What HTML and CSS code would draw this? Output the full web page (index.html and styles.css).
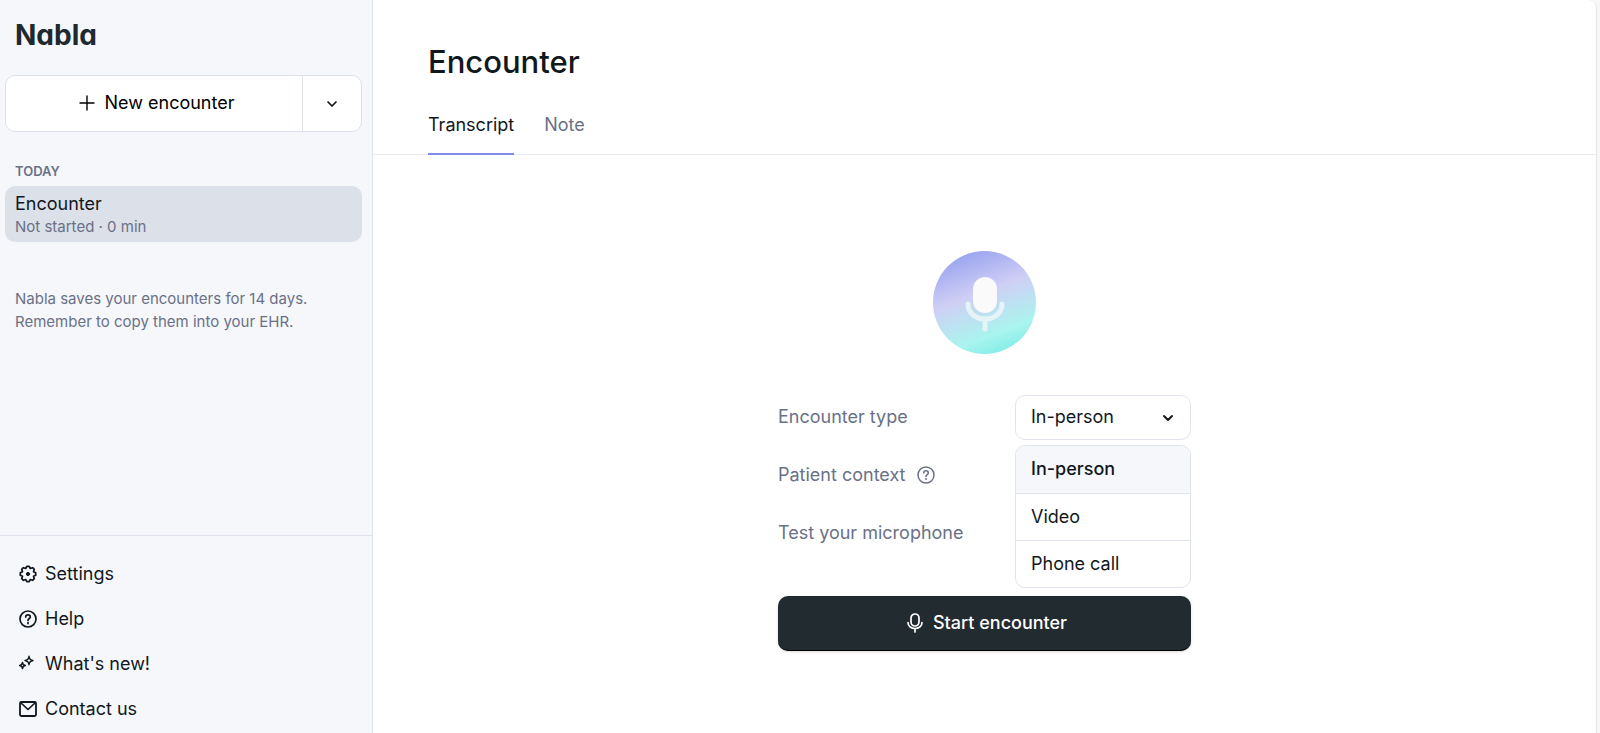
FILE: index.html
```
<!DOCTYPE html>
<html lang="en">
<head>
  <meta charset="UTF-8">
  <meta name="viewport" content="width=device-width, initial-scale=1.0">
  <title>Nabla</title>
  <link rel="stylesheet" href="styles.css">
</head>
<body>
  <div class="app">
    <aside class="sidebar">
      <a href="#" class="logo">Nabla</a>
      <div class="new">
        <button type="button" class="new-button">
          <svg width="16" height="16" viewBox="0 0 16 16"><path d="M8 1v14M1 8h14" stroke-width="1.4"/></svg>
          New encounter
        </button>
        <button type="button" class="new-more" aria-label="More options">
          <svg width="12" height="12" viewBox="0 0 12 12"><path d="M2 4l4 4 4-4" stroke-width="1.7"/></svg>
        </button>
      </div>

      <h2 class="day">TODAY</h2>
      <a href="#" class="item">
        <span class="item-title">Encounter</span>
        <span class="item-info">Not started · 0 min</span>
      </a>
      <p class="notice">Nabla saves your encounters for 14 days.<br>Remember to copy them into your EHR.</p>

      <nav class="links">
        <a href="#">
          <svg width="18" height="18" viewBox="0 0 18 18">
            <path d="M16.7 10.2L14.5 11.3L15.3 13.6L13.6 15.3L11.3 14.5L10.2 16.7H7.8L6.7 14.5L4.4 15.3L2.7 13.6L3.5 11.3L1.3 10.2V7.8L3.5 6.7L2.7 4.4L4.4 2.7L6.7 3.5L7.8 1.3H10.2L11.3 3.5L13.6 2.7L15.3 4.4L14.5 6.7L16.7 7.8Z" stroke-width="1.7"/>
            <circle cx="9" cy="9" r="1.6" fill="currentColor" stroke-width="1"/>
          </svg>
          Settings
        </a>
        <a href="#">
          <svg width="18" height="18" viewBox="0 0 18 18">
            <circle cx="9" cy="9" r="8" stroke-width="1.7"/>
            <path d="M6.7 7c0-1.3 1-2.2 2.3-2.2s2.3.9 2.3 2.1c0 1.6-2.3 1.7-2.3 3.5M9 12.6v1" stroke-width="1.7"/>
          </svg>
          Help
        </a>
        <a href="#">
          <svg width="18" height="18" viewBox="0 0 18 18">
            <path d="M10 1.3Q10.4 5 14 5.5Q10.4 6 10 9.7Q9.6 6 6 5.5Q9.6 5 10 1.3ZM3.5 7.4Q3.8 10.2 6.4 10.5Q3.8 10.8 3.5 13.6Q3.2 10.8.6 10.5Q3.2 10.2 3.5 7.4Z" stroke-width="1.4"/>
          </svg>
          What's new!
        </a>
        <a href="#">
          <svg width="18" height="18" viewBox="0 0 18 18">
            <rect x="1" y="2" width="16" height="14" rx="1.5" stroke-width="1.8"/>
            <path d="M2 3l7 6.5L16 3" stroke-width="1.7"/>
          </svg>
          Contact us
        </a>
      </nav>
    </aside>

    <main class="main">
      <header class="header">
        <h1>Encounter</h1>
        <nav class="tabs">
          <a href="#" class="tab active">Transcript</a>
          <a href="#" class="tab">Note</a>
        </nav>
      </header>

      <form class="start">
        <div class="circle">
          <svg width="40" height="56" viewBox="0 0 40 56">
            <path d="M3 28C3 37 10.5 43 20 43S37 37 37 28M20 43V53" stroke="#e6f4f8" stroke-width="5"/>
            <rect x="8" y="1" width="24" height="36" rx="12" fill="#fafafa" stroke="none"/>
          </svg>
        </div>

        <div class="row">
          <label for="type">Encounter type</label>
          <div class="picker">
            <select id="type">
              <option>In-person</option>
              <option>Video</option>
              <option>Phone call</option>
            </select>
            <svg class="arrow" width="12" height="12" viewBox="0 0 12 12"><path d="M2 4l4 4 4-4" stroke-width="2"/></svg>
            <div class="menu">
              <button type="button" class="selected">In-person</button>
              <button type="button">Video</button>
              <button type="button">Phone call</button>
            </div>
          </div>
        </div>
        <div class="row">
          <span>Patient context</span>
          <button type="button" class="hint" aria-label="About patient context">
            <svg width="18" height="18" viewBox="0 0 18 18">
              <circle cx="9" cy="9" r="8" stroke-width="1.5"/>
              <path d="M6.7 7c0-1.3 1-2.2 2.3-2.2s2.3.9 2.3 2.1c0 1.6-2.3 1.7-2.3 3.5M9 12.6v1" stroke-width="1.5"/>
            </svg>
          </button>
        </div>
        <div class="row">
          <span>Test your microphone</span>
        </div>

        <button type="button" class="start-button">
          <svg width="16" height="20" viewBox="0 0 16 20">
            <rect x="4" y="1" width="8" height="12" rx="4" stroke-width="1.7"/>
            <path d="M1 9.5C1 13 4 15.5 8 15.5S15 13 15 9.5M8 15.5V19" stroke-width="1.7"/>
          </svg>
          Start encounter
        </button>
      </form>
    </main>
  </div>
</body>
</html>
```
FILE: styles.css
```
*{
  margin: 0; padding: 0;
  box-sizing: border-box;
}
body{
  background-color: #f7f7f7;
  color: #11181c;
  font-family: Inter, "Liberation Sans", sans-serif;
  font-size: 18px; line-height: 24px;
}
a{
  color: inherit;
  text-decoration: none;
}
button, select{
  font: inherit; color: inherit;
  background-color: transparent;
  border: 0;
  cursor: pointer;
}
svg{
  display: block;
  flex: none;
  fill: none;
  stroke: currentColor;
  stroke-linecap: round; stroke-linejoin: round;
}

.app{
  display: flex;
  min-height: 100vh;
  margin-right: 3px;
  border-right: 1px solid #e6e6e8;
  border-radius: 4px 8px 0 0;
  background-color: white;
  overflow: hidden;
}

/* left side */
.sidebar{
  display: flex; flex-direction: column;
  width: 373px; flex: none;
  background-color: #f5f7fb;
  border-right: 1px solid #dfe3ec;
}
.logo{
  margin: 19px 15px 24px;
  color: #20292e;
  font-size: 28px; font-weight: 700; line-height: 32px;
  font-feature-settings: "cv11";
}
.new{
  display: flex;
  height: 57px;
  margin: 0 10px 0 5px;
  background-color: white;
  border: 1px solid #dde1ea;
  border-radius: 10px;
}
.new-button{
  display: flex; flex: 1;
  justify-content: center; align-items: center;
  gap: 10px;
  padding: 0 0 1px 5px;
  color: black;
}
.new-more{
  display: flex;
  justify-content: center; align-items: center;
  width: 59px;
  border-left: 1px solid #dde1ea;
}
.day{
  margin: 29px 15px 5px;
  color: #6a7187;
  font-size: 13px; font-weight: 600; line-height: 20px;
}
.item{
  display: flex; flex-direction: column;
  margin: 0 10px 0 5px; padding: 6px 10px 4px;
  background-color: #dbe0e9;
  border-radius: 10px;
}
.item-info, .notice{
  color: #6a7187;
  font-size: 15px; line-height: 22px;
}
.notice{
  margin: 45px 15px;
  line-height: 23px;
}
.links{
  margin-top: auto; padding: 15px 19px 2px;
  border-top: 1px solid #dfe3ec;
}
.links a{
  display: flex; align-items: center;
  gap: 8px;
  height: 45px;
}

/* right side */
.main{
  flex: 1;
}
.header{
  padding: 44px 55px 0;
  border-bottom: 1px solid #e8eaf1;
}
h1{
  font-size: 31px; font-weight: 500; line-height: 36px;
}
.tabs{
  display: flex;
  gap: 30px;
  margin-top: 33px;
}
.tab{
  height: 41px;
  color: #6a7187;
}
.tab.active{
  height: 42px;
  margin-bottom: -1px;
  color: #11181c;
  border-bottom: 2px solid #7f8aec;
}

.start{
  display: flex; flex-direction: column;
  gap: 13px;
  width: 413px;
  margin: 96px auto 40px;
  color: #6a7187;
}
.circle{
  display: flex;
  justify-content: center; align-items: center;
  width: 103px; height: 103px;
  margin: 0 auto 28px;
  padding-top: 2px;
  border-radius: 50%;
  background: linear-gradient(160deg, #9ba4ef 10%, #cfcff5 42%, #aaf4ee 75%, #7fede6 92%);
}
.row{
  display: flex; align-items: center;
  height: 45px;
  padding-bottom: 1px;
}
.hint{
  margin-left: 11px;
}
.picker{
  position: relative;
  width: 176px;
  margin-left: auto;
  color: #11181c;
}
select{
  appearance: none;
  display: block;
  width: 100%; height: 45px;
  padding: 0 15px;
  background-color: white;
  border: 1px solid #e1e4ee;
  border-radius: 10px;
}
.arrow{
  position: absolute;
  top: 17px; right: 17px;
  pointer-events: none;
}
.menu{
  position: absolute;
  top: 50px; left: 0; right: 0;
  background-color: white;
  border: 1px solid #dfe3ec;
  border-radius: 10px;
  overflow: hidden;
}
.menu button{
  display: block;
  width: 100%; height: 47px;
  padding: 0 15px;
  text-align: left;
}
.menu button + button{
  border-top: 1px solid #dfe3ec;
}
.menu .selected{
  background-color: #f5f7fb;
  font-weight: 500;
}
.start-button{
  display: flex;
  justify-content: center; align-items: center;
  gap: 10px;
  height: 55px;
  margin-top: 27px;
  padding-left: 5px;
  background-color: #222b30;
  border-bottom: 1px solid black;
  border-radius: 10px;
  box-shadow: 0 1px 3px rgba(0, 0, 0, 0.15);
  color: white;
  font-weight: 500;
}
```
